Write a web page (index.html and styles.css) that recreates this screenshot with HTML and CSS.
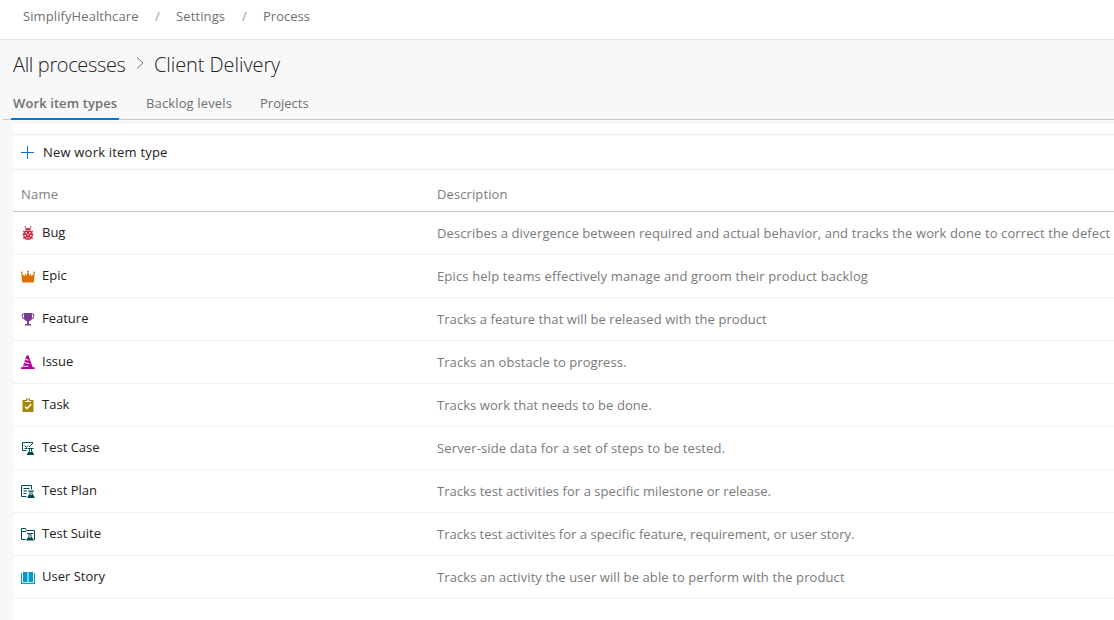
FILE: index.html
```html
<!DOCTYPE html>
<html lang="en">
<head>
<meta charset="utf-8">
<title>Process - Client Delivery</title>
<link rel="stylesheet" href="styles.css">
</head>
<body>
<nav class="topbar"><span class="crumb org">SimplifyHealthcare</span><span class="slash">/</span><span class="crumb settings">Settings</span><span class="slash">/</span><span class="crumb">Process</span></nav>
<header class="heading">
  <h1 class="title"><span class="title-all">All processes</span><svg class="chevron" width="9" height="14" viewBox="0 0 9 14"><path d="M1 1.500 7 7 1 12.500"/></svg><span class="title-current">Client Delivery</span></h1>
  <div class="tabs"><span class="tab active">Work item types</span><span class="tab backlog">Backlog levels</span><span class="tab projects">Projects</span></div>
</header>
<main class="content">
  <div class="toolbar"><svg class="plus" width="13" height="13" viewBox="0 0 13 13"><path d="M6.500 0v13M0 6.500h13"/></svg><span class="new-type">New work item type</span></div>
  <div class="row head"><span class="name n-head">Name</span><span class="desc d-head">Description</span></div>
  <div class="row"><svg class="icon bug" viewBox="0 0 14 14"><path d="M4.300 0v1.500L5.500 3M9.700 0v1.500L8.500 3M2 5l1.500 1M12 5l-1.500 1M1.500 8.500h1M12.500 8.500h-1M2 12.500l1.500-1M12 12.500l-1.500-1" fill="none" stroke="currentColor"/><path d="M4 4.500Q4.200 2 7 2t3 2.500z"/><path fill-rule="evenodd" d="M3.500 5h7C12.300 7 12.300 11 10.500 12.700 9 14.300 5 14.300 3.500 12.700 1.700 11 1.700 7 3.500 5zM4.500 6v1.500h1.300V6zM8.200 6v1.500h1.300V6zM3.600 9v1.500H5V9zM9 9v1.500h1.400V9zM6.400 8v1.300h1.200V8zM5.600 11.300v1.300h.9v-1.300zM7.600 11.300v1.300h.9v-1.300z"/></svg><span class="name">Bug</span><span class="desc d1">Describes a divergence between required and actual behavior, and tracks the work done to correct the defect</span></div>
  <div class="row"><svg class="icon epic" viewBox="0 0 14 14"><path d="M1.200 13.500.3 3.500 3.400 7.200 4.300 4.500 5.300 7 7 2l1.700 5 1-2.500.9 2.700 3.100-3.700-.9 10z"/><circle cx=".8" cy="3.400" r=".8"/><circle cx="13.200" cy="3.400" r=".8"/><circle cx="7" cy="2.400" r=".9"/></svg><span class="name">Epic</span><span class="desc d2">Epics help teams effectively manage and groom their product backlog</span></div>
  <div class="row"><svg class="icon feature" viewBox="0 0 14 14"><path d="M3 1h8v4.500Q11 8.800 8 9.300V12h2v1.500H4V12h2V9.300Q3 8.800 3 5.500z"/><path d="M3.500 2H1.300v2.500q0 2.500 2.500 2.500M10.500 2h2.200v2.500q0 2.500-2.500 2.500" fill="none" stroke="currentColor"/></svg><span class="name">Feature</span><span class="desc d3">Tracks a feature that will be released with the product</span></div>
  <div class="row"><svg class="icon issue" viewBox="0 0 14 14"><path d="M5.500.500h2l4.200 11.800h2V14H0v-1.700h1.700z"/><path d="M4.500 4.200 7.500 5.200M3.500 7.500 8.500 8.800M2.400 11.300h5" fill="none" stroke="#fff" stroke-width="1.100"/></svg><span class="name">Issue</span><span class="desc d4">Tracks an obstacle to progress.</span></div>
  <div class="row"><svg class="icon task" viewBox="0 0 14 14"><path fill-rule="evenodd" d="M2 2h3V.500h4V2h3q.500 0 .500.500v11q0 .500-.500.500H2q-.500 0-.500-.500v-11Q1.500 2 2 2zM6.300 1.300V3H4v1h6V3H7.700V1.300z"/><path d="M4 8.500l2 2L10.300 6.300" fill="none" stroke="#fff" stroke-width="1.500"/></svg><span class="name">Task</span><span class="desc d5">Tracks work that needs to be done.</span></div>
  <div class="row"><svg class="icon test" viewBox="0 0 14 14"><path d="M5.500 9.500h-4v-8h10.500M3.500 4.500 5.300 6.500 7 4.500M12 2 8 6M3.500 7.500h2.500" class="line"/><path d="M6.500 7.500h6M8.500 7.500v2.500L6.500 13.500M10.500 7.500v2.500l2 3.500" class="line"/><path d="M7.500 11h4l1.900 3H5.600z"/></svg><span class="name">Test Case</span><span class="desc d6">Server-side data for a set of steps to be tested.</span></div>
  <div class="row"><svg class="icon test" viewBox="0 0 14 14"><path d="M5.500 12.500h-5v-11h10v4M2.500 4.500h6M2.500 7h3.500M2.500 9.500h3" class="line"/><path d="M7 7h6M9 7v3L7 13.500M11 7v3l2 3.500" class="line"/><path d="M8 10.800h4l1.900 3.200H6.100z"/></svg><span class="name">Test Plan</span><span class="desc d7">Tracks test activities for a specific milestone or release.</span></div>
  <div class="row"><svg class="icon test" viewBox="0 0 14 14"><path d="M4.500 12.500H.500v-11H4.500L5.500 3.500h8v9.500M.500 4.500h4.500" class="line"/><path d="M6 6.500h6M8 6.500v3L6 13M10 6.500v3l2 3.500" class="line"/><path d="M7 10.500h4l1.900 3H5.100z"/></svg><span class="name">Test Suite</span><span class="desc d8">Tracks test activites for a specific feature, requirement, or user story.</span></div>
  <div class="row"><svg class="icon story" viewBox="0 0 14 14"><path d="M2 2h4q.500 0 .500.500v9.500H2zM7.500 2.500q0-.500.500-.500h4v10H7.500zM0 3h1v9.800h5.500l.500.500.500-.500H13V3h1v11H0z"/></svg><span class="name">User Story</span><span class="desc d9">Tracks an activity the user will be able to perform with the product</span></div>
</main>
</body>
</html>
```
FILE: styles.css
```css
* { box-sizing: border-box; }
body { margin: 0; height: 620px; overflow: hidden; background: #f8f8f8; color: #222; font: 13px/18px "Open Sans", "Noto Sans", sans-serif; }
.topbar { height: 40px; background: #fff; border-bottom: 1px solid #e5e5e5; display: flex; padding: 7px 0 0 23px; color: #707070; white-space: nowrap; }
.crumb.org { width: 116px; letter-spacing: .09px; }
.crumb.settings { width: 50px; letter-spacing: .12px; }
.slash { width: 37px; text-align: center; color: #999; }
.heading { height: 84px; padding-left: 3px; }
.title { margin: 0; padding: 11px 0 0 10px; height: 53px; font-size: 20px; line-height: 28px; font-weight: 300; display: flex; color: #222; white-space: nowrap; }
.title-all { width: 122px; letter-spacing: -.35px; }
.title-current { letter-spacing: -.08px; }
.chevron { margin: 5px 9px 0 1px; fill: none; stroke: #777; }
.tabs { height: 27px; border-bottom: 1px solid #c8c8c8; display: flex; padding-left: 8px; color: #707070; white-space: nowrap; }
.tab { height: 27px; padding-top: 1px; }
.tab.active { width: 108px; padding-left: 2px; font-weight: 600; letter-spacing: .1px; border-bottom: 2px solid #0078d4; }
.tab.backlog { margin-left: 27px; width: 114px; letter-spacing: .14px; }
.content { margin-left: 13px; padding-top: 10px; height: 496px; background: #fff; }
.toolbar { height: 36px; border: solid #eaeaea; border-width: 1px 0; display: flex; padding: 8px 0 0 8px; white-space: nowrap; }
.new-type { letter-spacing: .2px; }
.plus { margin: 3px 9px 0 0; stroke: #106ebe; fill: none; }
.row { height: 43px; border-bottom: 1px solid #f1f1f1; display: grid; grid-template-columns: 14px 388px auto; column-gap: 7px; padding: 11px 0 0 8px; white-space: nowrap; }
.head { height: 42px; grid-template-columns: 409px auto; padding-top: 15px; border-color: #c8c8c8; color: #808080; }
.desc { color: #7a7a7a; padding-top: 1px; }
.head .desc { padding-top: 0; }
.name, .desc { justify-self: start; }
.n-head { letter-spacing: .25px; }
.d-head { letter-spacing: .1px; }
.d1 { letter-spacing: .11px; }
.d2 { letter-spacing: .15px; }
.d3 { letter-spacing: .07px; }
.d4 { letter-spacing: .07px; }
.d5 { letter-spacing: .06px; }
.d6 { letter-spacing: .13px; }
.d7 { letter-spacing: .05px; }
.d8 { letter-spacing: .03px; }
.d9 { letter-spacing: .1px; }
.icon { width: 14px; height: 14px; margin-top: 3px; fill: currentColor; }
.line { fill: none; stroke: currentColor; }
.bug { color: #cc293d; }
.epic { color: #e06c00; }
.feature { color: #773b93; }
.issue { color: #b4009e; }
.task { color: #a4880a; }
.test { color: #004b50; }
.story { color: #009ccc; }
```
